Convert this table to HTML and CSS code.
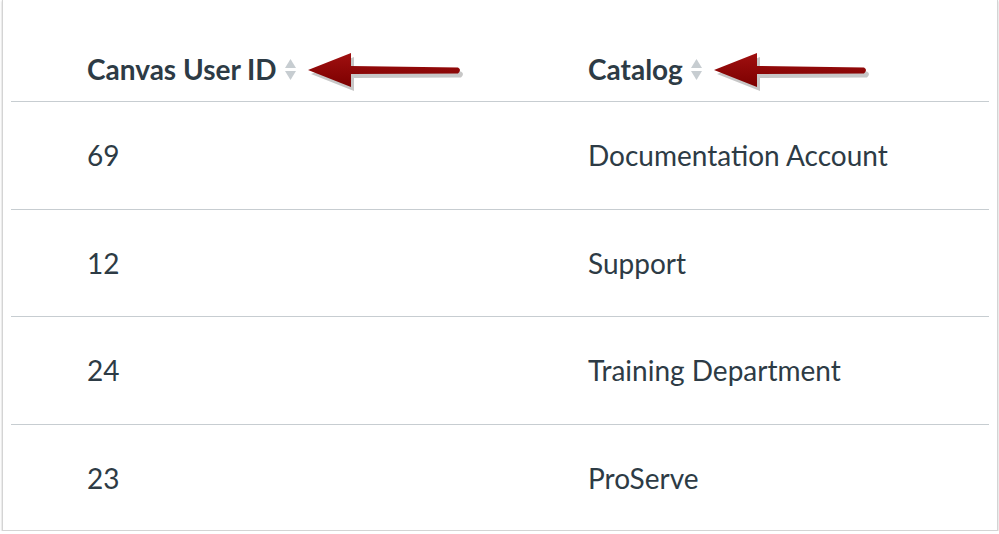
FILE: index.html
```html
<!DOCTYPE html>
<html>
<head>
<meta charset="utf-8">
<link rel="stylesheet" href="styles.css">
</head>
<body>
<div class="frame">
  <div class="table">
    <div class="row head">
      <div class="cell c1">
        <span class="label">Canvas User ID</span>
        <svg class="sort" width="11" height="21" viewBox="0 0 11 21"><path d="M5.5 0 L11 9 L0 9 Z" fill="#c7cdd1"/><path d="M0 12 L11 12 L5.5 21 Z" fill="#c7cdd1"/></svg>
        <svg class="arrow a1" width="160" height="44" viewBox="0 0 160 44"><defs><linearGradient id="g1" x1="0" y1="0" x2="0" y2="1"><stop offset="0" stop-color="#a01010"/><stop offset="1" stop-color="#7c0000"/></linearGradient></defs><g transform="translate(3,4)" fill="#000" opacity="0.22"><path d="M0 18 L43 1 L43 14 L150 15.5 Q154 17.5 150 21.5 L43 22 L43 35 Z"/></g><path d="M0 18 L43 1 L43 14 L150 15.5 Q154 17.5 150 21.5 L43 22 L43 35 Z" fill="url(#g1)"/></svg>
      </div>
      <div class="cell c2">
        <span class="label">Catalog</span>
        <svg class="sort" width="11" height="21" viewBox="0 0 11 21"><path d="M5.5 0 L11 9 L0 9 Z" fill="#c7cdd1"/><path d="M0 12 L11 12 L5.5 21 Z" fill="#c7cdd1"/></svg>
        <svg class="arrow a2" width="160" height="44" viewBox="0 0 160 44"><defs><linearGradient id="g2" x1="0" y1="0" x2="0" y2="1"><stop offset="0" stop-color="#a01010"/><stop offset="1" stop-color="#7c0000"/></linearGradient></defs><g transform="translate(3,4)" fill="#000" opacity="0.22"><path d="M0 18 L43 1 L43 14 L150 15.5 Q154 17.5 150 21.5 L43 22 L43 35 Z"/></g><path d="M0 18 L43 1 L43 14 L150 15.5 Q154 17.5 150 21.5 L43 22 L43 35 Z" fill="url(#g2)"/></svg>
      </div>
    </div>
    <div class="row">
      <div class="cell c1">69</div>
      <div class="cell c2">Documentation Account</div>
    </div>
    <div class="row">
      <div class="cell c1">12</div>
      <div class="cell c2">Support</div>
    </div>
    <div class="row">
      <div class="cell c1">24</div>
      <div class="cell c2">Training Department</div>
    </div>
    <div class="row last">
      <div class="cell c1">23</div>
      <div class="cell c2">ProServe</div>
    </div>
  </div>
</div>
</body>
</html>
```
FILE: styles.css
```css
html, body {
  margin: 0;
  padding: 0;
  background: #ffffff;
}
body {
  font-family: Lato, "Open Sans", sans-serif;
  color: #2d3b45;
}
.frame {
  margin-left: 2px;
  width: 994px;
  height: 530px;
  border: 1px solid #d4d4d4;
  border-top: none;
  box-shadow: 0 1px 2px rgba(0, 0, 0, 0.25);
  background: #fff;
  overflow: hidden;
}
.table {
  margin: 0 8px;
  display: flex;
  flex-direction: column;
}
.row {
  display: grid;
  grid-template-columns: 501px 1fr;
  height: 106.5px;
  flex: none;
  border-bottom: 1px solid #c7cdd1;
}
.row.head {
  height: 101px;
}
.row.last {
  border-bottom: none;
}
.cell {
  display: flex;
  align-items: center;
  padding-left: 76px;
  font-size: 28px;
  line-height: 34px;
  position: relative;
}
.head .cell {
  align-items: flex-end;
  padding-bottom: 15px;
  font-weight: 700;
}
.sort {
  margin-left: 8px;
  margin-bottom: 6px;
}
.arrow {
  position: absolute;
  top: 52px;
}
.a1 {
  left: 297px;
}
.a2 {
  left: 202px;
}
```
